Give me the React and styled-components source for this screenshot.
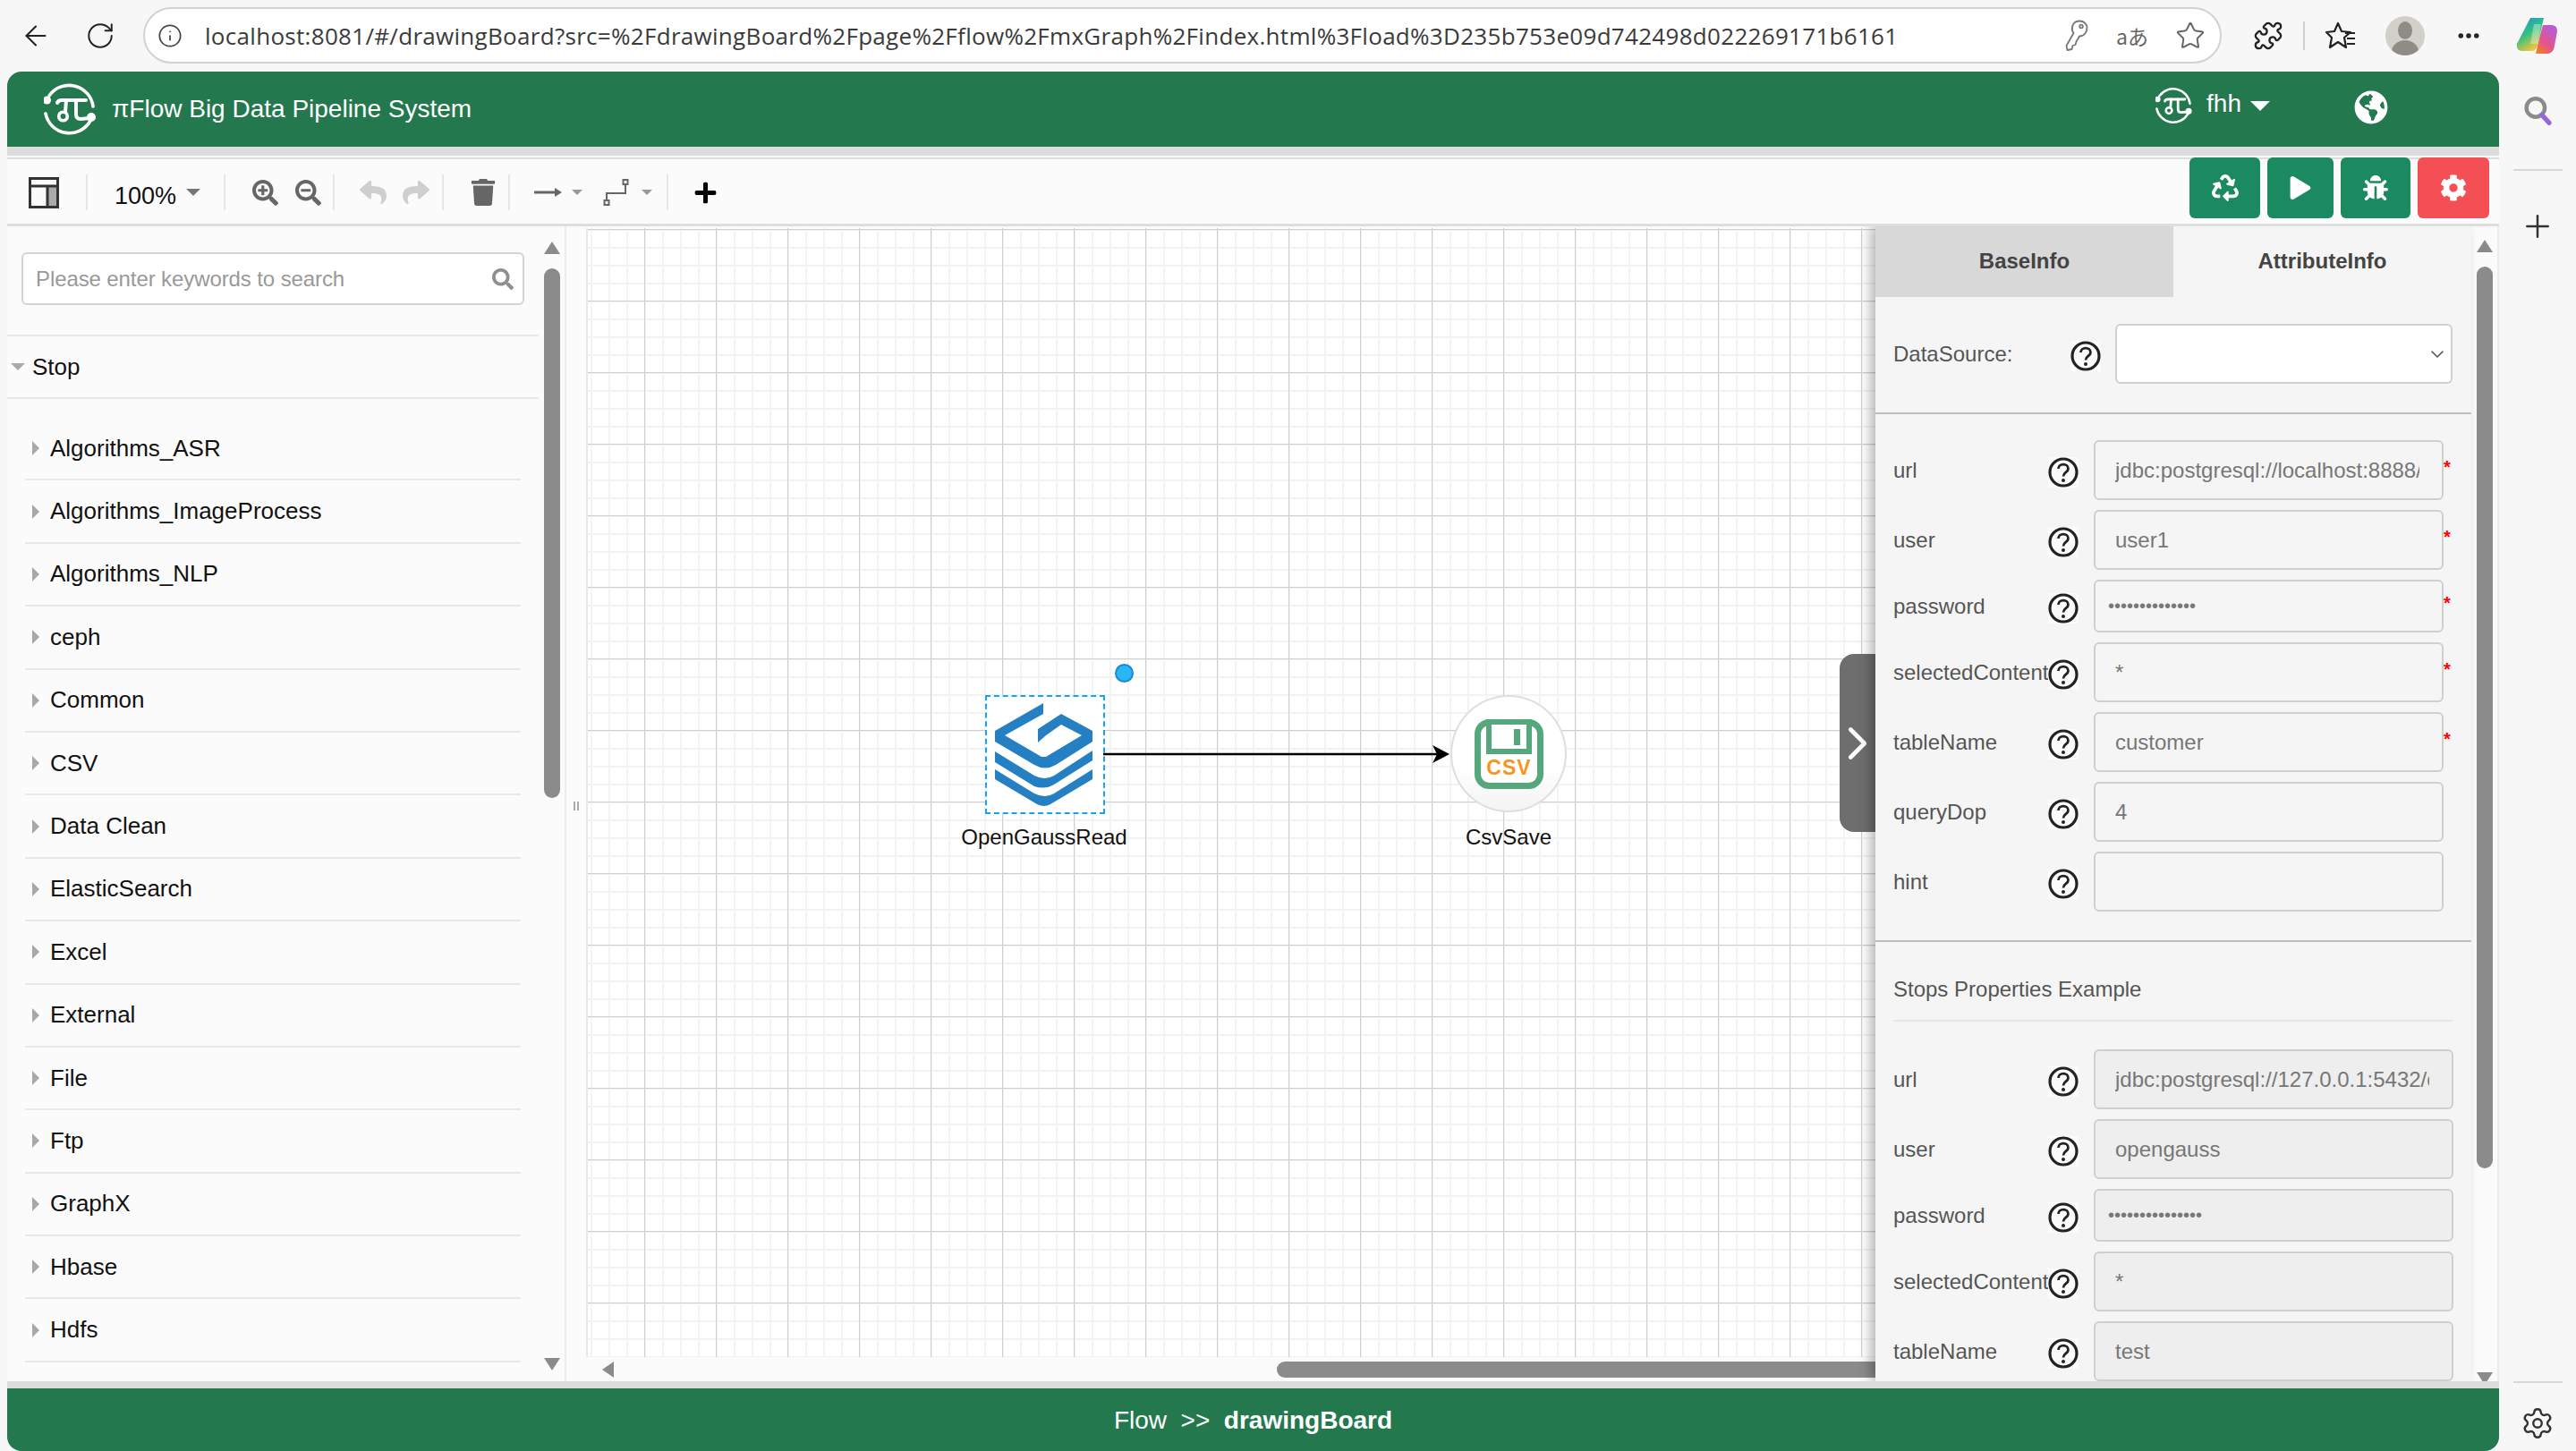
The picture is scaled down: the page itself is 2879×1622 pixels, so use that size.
import React from 'react'
import styled, { createGlobalStyle } from 'styled-components'
import { ArrowLeft, RotateCw, Info, Star, Puzzle, Ellipsis, Plus, Settings, ChevronRight, ChevronDown } from 'lucide-react'
import { FaRecycle, FaPlay, FaBug, FaCog, FaGlobeAmericas, FaTrash, FaSearchPlus, FaSearchMinus, FaReply, FaShare, FaSearch, FaPlus } from 'react-icons/fa'

const Global = createGlobalStyle`
html, body { margin: 0; padding: 0; background: #f7f7f7; }
* { box-sizing: border-box; }
body { font-family: "Liberation Sans", Arial, sans-serif; }
`

const Page = styled.div`
width: 2879px;
height: 1622px;
overflow: hidden;
display: flex;
flex-direction: column;
background: #f7f7f7;
`

/* browser chrome */
const ChromeBar = styled.div`
height: 80px;
flex: none;
display: flex;
align-items: flex-start;
padding: 8px 0 0 4px;
`
const Slot = styled.div`
width: ${p => p.$w || 72}px;
height: 63px;
flex: none;
margin-left: ${p => p.$ml || 0}px;
display: flex;
align-items: center;
justify-content: center;
color: #222;
`
const AddressBar = styled.div`
width: 2323px;
height: 63px;
flex: none;
margin-left: 12px;
background: #fff;
border: 2px solid #d2d2d2;
border-radius: 32px;
display: flex;
align-items: center;
padding: 0 16px 0 14px;
color: #444;
`
const Url = styled.span`
margin-left: 25px;
font-family: "Open Sans", sans-serif;
font-size: 26px;
letter-spacing: 0.3px;
color: #3a3a3a;
white-space: nowrap;
`
const AddressTools = styled.div`
margin-left: auto;
display: flex;
align-items: center;
gap: 30px;
color: #666;
`
const Translate = styled.span`
font-family: "Noto Sans CJK JP", sans-serif;
font-size: 23px;
color: #666;
width: 36px;
text-align: center;
`
const ChromeSep = styled.div`
width: 2px;
height: 32px;
margin: 16px 6px 0 3px;
background: #d0d0d0;
flex: none;
`
const Avatar = styled.div`
width: 44px;
height: 44px;
margin: 10px 0 0 16px;
flex: none;
border-radius: 50%;
background: #d1d0cb;
position: relative;
overflow: hidden;
&::before {
  content: "";
  position: absolute;
  left: 14px;
  top: 6px;
  width: 16px;
  height: 20px;
  border-radius: 50%;
  background: #8f8c85;
}
&::after {
  content: "";
  position: absolute;
  left: 7px;
  top: 27px;
  width: 30px;
  height: 26px;
  border-radius: 50%;
  background: #8f8c85;
}
`

const Body = styled.div`
flex: 1;
min-height: 0;
display: flex;
`
const Main = styled.div`
width: 2785px;
margin-left: 8px;
flex: none;
display: flex;
flex-direction: column;
`

/* right rail of the browser */
const Rail = styled.div`
flex: 1;
display: flex;
flex-direction: column;
align-items: center;
padding-top: 28px;
color: #333;
`
const RailLine = styled.div`
width: 55px;
height: 2px;
background: #d8d8d8;
margin-top: ${p => p.$mt || 0}px;
`
const RailPlus = styled.div`
margin-top: 42px;
height: 40px;
color: #333;
`
const RailBottom = styled.div`
margin-top: auto;
display: flex;
flex-direction: column;
align-items: center;
padding-bottom: 12px;
gap: 26px;
`

/* green header */
const Header = styled.div`
height: 84px;
flex: none;
background: #23784d;
border-radius: 16px 16px 0 0;
display: flex;
align-items: center;
color: #fff;
padding-left: 41px;
`
const Title = styled.div`
margin-left: 16px;
font-size: 28px;
white-space: nowrap;
`
const UserBox = styled.div`
margin-left: auto;
display: flex;
align-items: center;
margin-top: -8px;
margin-right: 124px;
`
const UserName = styled.span`
font-size: 28px;
margin-left: 15px;
margin-top: -4px;
`
const Caret = styled.span`
display: inline-block;
width: 0;
height: 0;
margin-left: ${p => p.$ml || 0}px;
border-left: ${p => p.$s}px solid transparent;
border-right: ${p => p.$s}px solid transparent;
border-top: ${p => p.$s}px solid ${p => p.$c};
`
const Globe = styled(FaGlobeAmericas)`
margin: 3px 0 0 94px;
`
const Strip = styled.div`
height: ${p => p.$h}px;
flex: none;
background: #dcdcdc;
`

/* toolbar */
const Toolbar = styled.div`
height: 77px;
flex: none;
margin-top: 2px;
padding-top: 2px;
background: #fbfbfb;
border-top: 2px solid #dedede;
border-bottom: 3px solid #dedede;
display: flex;
align-items: center;
`
const ToolGroup = styled.div`
width: ${p => p.$w}px;
height: 40px;
flex: none;
display: flex;
align-items: center;
gap: ${p => p.$gap || 0}px;
padding-left: ${p => p.$pl}px;
border-right: ${p => (p.$last ? 'none' : '2px solid #e6e6e6')};
color: ${p => p.$c || '#666'};
`
const ToolSpacer = styled.span`
width: ${p => p.$w}px;
`
const ZoomText = styled.span`
font-size: 27px;
color: #111;
margin-right: 11px;
margin-top: 8px;
`
const Actions = styled.div`
margin-left: auto;
margin-right: 11px;
align-self: flex-start;
margin-top: -4px;
display: flex;
gap: 8px;
`
const ActionButton = styled.div`
width: ${p => p.$w}px;
height: 68px;
border-radius: 6px;
background: ${p => (p.$danger ? '#f44f54' : '#1c8a60')};
color: #fff;
display: flex;
align-items: center;
justify-content: center;
`

/* workspace */
const Workspace = styled.div`
flex: 1;
min-height: 0;
display: flex;
overflow: hidden;
`
const Sidebar = styled.div`
width: 625px;
flex: none;
background: #fbfbfb;
border-right: 2px solid #ececec;
display: flex;
`
const SideList = styled.div`
width: 594px;
flex: none;
`
const SearchArea = styled.div`
height: 123px;
padding: 29px 16px 0;
border-bottom: 2px solid #e8e8e8;
`
const SearchBox = styled.div`
height: 59px;
background: #fff;
border: 2px solid #d4d4d4;
border-radius: 6px;
display: flex;
align-items: center;
justify-content: space-between;
padding: 0 10px 0 14px;
color: #999;
font-size: 24px;
letter-spacing: -0.1px;
`
const StopRow = styled.div`
height: 70px;
display: flex;
align-items: center;
padding-left: 4px;
border-bottom: 2px solid #e8e8e8;
font-size: 26px;
color: #111;
gap: 8px;
`
const StopRows = styled.div`
padding: 21px 20px 0 20px;
`
const StopItem = styled.div`
height: 70.4px;
display: flex;
align-items: center;
padding-left: 8px;
border-bottom: 2px solid #e8e8e8;
font-size: 26px;
color: #111;
`
const SideArrow = styled.span`
width: 0;
height: 0;
margin-right: 12px;
border-top: 8px solid transparent;
border-bottom: 8px solid transparent;
border-left: 8px solid #a8a8a8;
`
const ScrollCol = styled.div`
width: 18px;
flex: none;
margin-left: ${p => p.$ml || 0}px;
padding: ${p => p.$pt}px 0 ${p => p.$pb}px;
display: flex;
flex-direction: column;
height: 100%;
`
const ScrollUp = styled.div`
width: 0;
height: 0;
border-left: 9px solid transparent;
border-right: 9px solid transparent;
border-bottom: 14px solid #8b8b8b;
flex: none;
`
const ScrollDown = styled.div`
width: 0;
height: 0;
margin-top: auto;
margin-bottom: ${p => p.$mb || 0}px;
border-left: 9px solid transparent;
border-right: 9px solid transparent;
border-top: 14px solid #8b8b8b;
flex: none;
`
const ScrollThumb = styled.div`
width: 18px;
height: ${p => p.$h}px;
margin-top: 16px;
border-radius: 9px;
background: #8b8b8b;
flex: none;
`
const Splitter = styled.div`
width: 22px;
flex: none;
background: #fbfbfb;
display: flex;
align-items: center;
justify-content: center;
gap: 2px;
`
const Grip = styled.div`
width: 2px;
height: 10px;
margin-top: 4px;
background: #aaa;
`
const CanvasCol = styled.div`
width: 1441px;
flex: none;
display: flex;
flex-direction: column;
background: #fbfbfb;
position: relative;
`
const Grid = styled.div`
flex: 1;
position: relative;
margin-top: 2px;
border-left: 2px solid #e8e8e8;
background-color: #fff;
background-image:
  linear-gradient(#cfcfcf 1px, transparent 1px),
  linear-gradient(90deg, #cfcfcf 1px, transparent 1px),
  linear-gradient(#f3f3f3 2px, transparent 2px),
  linear-gradient(90deg, #f3f3f3 2px, transparent 2px);
background-size: 80px 80px, 80px 80px, 20px 20px, 20px 20px;
background-position: 0 1px, -17px 0, 0 1px, -17px 0;
`
const Node = styled.div`
position: absolute;
left: ${p => p.$x}px;
top: ${p => p.$y}px;
width: ${p => p.$w}px;
height: ${p => p.$h}px;
`
const Selected = styled(Node)`
background: #fff;
border: 2px dashed #12a5f4;
padding-right: 3px;
display: flex;
align-items: center;
justify-content: center;
`
const Handle = styled(Node)`
border-radius: 50%;
background: #29b6f6;
border: 2px solid #1a8ad0;
`
const RoundNode = styled(Node)`
border-radius: 50%;
border: 2px solid #dedede;
background: linear-gradient(#fff 60%, #f4f4f4);
display: flex;
align-items: center;
justify-content: center;
`
const NodeLabel = styled(Node)`
font-size: 24px;
line-height: 28px;
text-align: center;
color: #111;
white-space: nowrap;
`
const Edge = styled.svg`
position: absolute;
left: ${p => p.$x}px;
top: ${p => p.$y}px;
`
const HScroll = styled.div`
height: 27px;
flex: none;
padding-top: 1px;
display: flex;
align-items: center;
padding-left: 18px;
`
const ScrollLeft = styled.div`
width: 0;
height: 0;
border-top: 9px solid transparent;
border-bottom: 9px solid transparent;
border-right: 13px solid #8b8b8b;
`
const HThumb = styled.div`
height: 18px;
margin-left: 741px;
flex: 1;
border-radius: 9px 0 0 9px;
background: #8b8b8b;
`
const Toggle = styled.div`
position: absolute;
right: 0;
top: 478px;
width: 40px;
height: 199px;
background: #6e6e6e;
border-radius: 16px 0 0 16px;
display: flex;
align-items: center;
justify-content: center;
color: #fff;
`
const ToggleIcon = styled(ChevronRight)`
flex: none;
`

/* right panel */
const Panel = styled.div`
width: 666px;
flex: none;
background: #f5f5f5;
box-shadow: -6px 0 12px rgba(0, 0, 0, 0.28);
position: relative;
overflow: hidden;
`
const Tabs = styled.div`
height: 79px;
display: flex;
`
const Tab = styled.div`
flex: 1;
display: flex;
align-items: center;
justify-content: center;
padding-bottom: 2px;
font-size: 24px;
font-weight: 700;
color: #444;
background: ${p => (p.$off ? '#d8d8d8' : 'transparent')};
`
const SourceRow = styled.div`
display: flex;
align-items: center;
padding: 30px 21px 32px 20px;
border-bottom: 2px solid #bdbdbd;
`
const Label = styled.div`
width: ${p => p.$w}px;
flex: none;
font-size: 24px;
color: #555;
overflow: hidden;
white-space: nowrap;
`
const Select = styled.div`
width: 377px;
height: 67px;
margin-left: 16px;
background: #fff;
border: 2px solid #d0d0d0;
border-radius: 6px;
display: flex;
align-items: center;
justify-content: flex-end;
padding-right: 3px;
color: #555;
`
const Fields = styled.div`
display: flex;
flex-direction: column;
gap: 11px;
padding: ${p => p.$pt}px 0 ${p => p.$pb}px 20px;
border-bottom: ${p => (p.$line ? '2px solid #bdbdbd' : 'none')};
`
const Row = styled.div`
height: ${p => p.$h || 67}px;
flex: none;
display: flex;
align-items: center;
`
const Field = styled.input`
width: ${p => (p.$example ? 402 : 391)}px;
height: 100%;
margin-left: 17px;
flex: none;
padding: 0 25px 0 ${p => (p.type === 'password' ? 14 : 22)}px;
border: 2px solid #cfcfcf;
border-radius: 6px;
outline: none;
background: ${p => (p.$example ? '#eeeeee' : 'transparent')};
color: #777;
font-family: "Liberation Sans", Arial, sans-serif;
font-size: ${p => (p.type === 'password' ? 20 : 24)}px;
`
const Required = styled.span`
color: #f00;
font-size: 20px;
font-weight: 700;
transform: translateY(-3px);
`
const ExampleTitle = styled.div`
height: 89px;
margin: 0 21px 0 20px;
padding-top: 39px;
font-size: 24px;
line-height: 28px;
color: #555;
border-bottom: 2px solid #e6e6e6;
`
const PanelScroll = styled.div`
width: 31px;
flex: none;
background: #fbfbfb;
padding-left: 6px;
border-right: 2px solid #ececec;
`
const HelpSvg = styled.svg`
flex: none;
margin-top: 4px;
`

/* footer */
const Footer = styled.div`
height: 70px;
flex: none;
padding-top: 2px;
background: #23784d;
border-radius: 0 0 16px 16px;
color: #fff;
font-size: 28px;
display: flex;
align-items: center;
justify-content: center;
white-space: pre;
`
const Crumb = styled.b`
font-weight: 700;
`

const PiLogo = ({ size }) => (
  <svg width={size} height={size} viewBox="0 0 60 60" fill="none" stroke="#fff" strokeWidth="3.6" strokeLinecap="round">
    <path d="M6 15 A27 27 0 0 1 55 27" />
    <path d="M52 43 A27 27 0 0 1 2 35" />
    <circle cx="3.5" cy="20" r="4.5" fill="#fff" stroke="none" />
    <circle cx="53" cy="39" r="5" fill="#fff" stroke="none" />
    <path d="M15 23 C16 20 18 20 20 20 L47 20" strokeWidth="4" />
    <path d="M25 20 L24 33" strokeWidth="4" />
    <path d="M36 20 L36 36 Q36 41 41 41 L52 40" strokeWidth="4" />
    <circle cx="21.5" cy="38" r="4.8" strokeWidth="3.6" />
  </svg>
)

const HelpIcon = () => (
  <HelpSvg width="34" height="34" viewBox="0 0 34 34" fill="none">
    <rect width="34" height="34" fill="#fbfbfb" />
    <circle cx="17" cy="17" r="15" stroke="#222" strokeWidth="3.2" />
    <path d="M11.5 13 C11.5 6.5 22.5 6.5 22.5 13 C22.5 17 17 17 17 21.5" stroke="#222" strokeWidth="2.8" />
    <circle cx="17" cy="26" r="2" fill="#222" />
  </HelpSvg>
)

const GaussLogo = () => (
  <svg width="111" height="116" viewBox="0 0 111 116" fill="#2580c3">
    <path d="M55 0 L1 31 L1 43 L45 69 Q57 76 69 69 L110 43 L110 31 L75 12 L49 29 L49 44 L58 36 L75 24 L98 36 L58 60 L53 60 L12 36 L55 12 Z" />
    <path d="M1 54 L45 81 Q57 87 67 81 L110 53 L110 64 L67 91 Q57 97 45 93 L1 66 Z" />
    <path d="M1 74 L45 101 Q57 107 67 101 L110 74 L110 85 L63 113 Q56 117 48 113 L1 85 Z" />
  </svg>
)

const CsvIcon = () => (
  <svg width="77" height="78" viewBox="0 0 77 78">
    <rect x="3.5" y="3.5" width="70" height="71" rx="13" fill="#fff" stroke="#55a87b" strokeWidth="7" />
    <rect x="16" y="3" width="45" height="33" fill="#fff" stroke="#55a87b" strokeWidth="6" />
    <rect x="44" y="11" width="7" height="18" fill="#55a87b" />
    <text x="38.5" y="62" textAnchor="middle" fontFamily="Liberation Sans" fontWeight="700" fontSize="23" letterSpacing="1" fill="#f7941e">CSV</text>
  </svg>
)

const LayoutIcon = () => (
  <svg width="34" height="35" viewBox="0 0 34 35" fill="none">
    <rect x="21" y="10" width="11" height="23" fill="#aaa" />
    <rect x="1.5" y="1.5" width="31" height="32" stroke="#333" strokeWidth="3" />
    <path d="M1 10 H33 M21 10 V34" stroke="#333" strokeWidth="3" />
  </svg>
)

const ConnectArrow = () => (
  <svg width="31" height="14" viewBox="0 0 31 14">
    <path d="M0 7 H26" stroke="#666" strokeWidth="3" />
    <path d="M23 2 L31 7 L23 12 Z" fill="#666" />
  </svg>
)

const WaypointIcon = () => (
  <svg width="39" height="30" viewBox="0 0 39 30" fill="none" stroke="#666" strokeWidth="2">
    <path d="M4 24 V16 H25 V6" />
    <rect x="22.5" y="1" width="5" height="5" />
    <rect x="1.5" y="24" width="5" height="5" />
  </svg>
)

const KeyIcon = () => (
  <svg width="28" height="36" viewBox="0 0 26 36" fill="none" stroke="#777" strokeWidth="1.8" strokeLinejoin="round">
    <path d="M16 1.5 C10 1.5 7 6.5 8 12 L9.5 15 L1.5 29 L2.5 34 L7.5 33 L8.5 29 L11.5 28 L12.5 24.5 L16 18.5 C22 18.5 24.5 13 24.5 9 C24.5 5 21 1.5 16 1.5 Z" />
    <circle cx="18" cy="7.5" r="1.8" />
  </svg>
)

const FavoritesIcon = () => (
  <svg width="34" height="34" viewBox="0 0 34 34" fill="none" stroke="#222" strokeWidth="2.2" strokeLinejoin="round">
    <path d="M14 3 L18 12 L28 13 L21 19 L23 30 L14 24 L5 30 L7 19 L1 13 L10 12 Z" fill="none" />
    <path d="M22 14 H33 M24 20 H33 M24 26 H33" />
  </svg>
)

const CopilotIcon = () => (
  <svg width="46" height="42" viewBox="0 0 46 42">
    <defs>
      <linearGradient id="copA" x1="0" y1="0" x2="0.5" y2="1">
        <stop offset="0" stopColor="#1b8fe0" />
        <stop offset="0.55" stopColor="#35c27f" />
        <stop offset="1" stopColor="#f2c53c" />
      </linearGradient>
      <linearGradient id="copB" x1="0.8" y1="0" x2="0.2" y2="1">
        <stop offset="0" stopColor="#b15fe0" />
        <stop offset="0.6" stopColor="#e2548f" />
        <stop offset="1" stopColor="#f47a2c" />
      </linearGradient>
    </defs>
    <path d="M16 1 H31 L24 32 Q23 38 16 38 H6 Q0 37 1 30 Z" fill="url(#copA)" />
    <path d="M22 41 H36 Q42 40 43 32 L46 16 Q46 8 38 9 H30 L27 20 L22 41 Z" fill="url(#copB)" />
    <path d="M20 8 H28 L24 30 H16 Z" fill="#fff" opacity="0.35" />
  </svg>
)

const RailSearch = () => (
  <svg width="33" height="32" viewBox="0 0 36 36" fill="none">
    <circle cx="15" cy="14" r="11.5" stroke="#8a8a8a" strokeWidth="5" />
    <path d="M23 23 L32 33" stroke="#9468d8" strokeWidth="6" strokeLinecap="round" />
  </svg>
)

const stops = ['Algorithms_ASR', 'Algorithms_ImageProcess', 'Algorithms_NLP', 'ceph', 'Common', 'CSV', 'Data Clean', 'ElasticSearch', 'Excel', 'External', 'File', 'Ftp', 'GraphX', 'Hbase', 'Hdfs']

const fields = [
  { name: 'url', value: 'jdbc:postgresql://localhost:8888/postgres', req: true },
  { name: 'user', value: 'user1', req: true },
  { name: 'password', value: 'xxxxxxxxxxxxxx', pass: true, req: true },
  { name: 'selectedContent', value: '*', req: true },
  { name: 'tableName', value: 'customer', req: true },
  { name: 'queryDop', value: '4' },
  { name: 'hint', value: '' },
]

const examples = [
  { name: 'url', value: 'jdbc:postgresql://127.0.0.1:5432/opengauss' },
  { name: 'user', value: 'opengauss' },
  { name: 'password', value: 'xxxxxxxxxxxxxxx', pass: true },
  { name: 'selectedContent', value: '*' },
  { name: 'tableName', value: 'test' },
]

const FieldRow = ({ item, example }) => (
  <Row $h={item.pass ? 59 : 67}>
    <Label $w={173}>{item.name}</Label>
    <HelpIcon />
    <Field readOnly $example={example} type={item.pass ? 'password' : 'text'} value={item.value} />
    {item.req && <Required>*</Required>}
  </Row>
)

const App = () => {
  return (
    <Page>
      <Global />
      <ChromeBar>
        <Slot><ArrowLeft size={36} strokeWidth={1.4} /></Slot>
        <Slot><RotateCw size={34} strokeWidth={1.4} /></Slot>
        <AddressBar>
          <Info size={28} strokeWidth={1.5} />
          <Url>localhost:8081/#/drawingBoard?src=%2FdrawingBoard%2Fpage%2Fflow%2FmxGraph%2Findex.html%3Fload%3D235b753e09d742498d022269171b6161</Url>
          <AddressTools>
            <KeyIcon />
            <Translate>aあ</Translate>
            <Star size={34} strokeWidth={1.4} />
          </AddressTools>
        </AddressBar>
        <Slot $ml={16}><Puzzle size={34} strokeWidth={1.6} /></Slot>
        <ChromeSep />
        <Slot $w={68}><FavoritesIcon /></Slot>
        <Avatar />
        <Slot $ml={13}><Ellipsis size={30} strokeWidth={2.4} /></Slot>
        <Slot $w={46} $ml={17}><CopilotIcon /></Slot>
      </ChromeBar>
      <Body>
        <Main>
          <Header>
            <PiLogo size={60} />
            <Title>πFlow Big Data Pipeline System</Title>
            <UserBox>
              <PiLogo size={42} />
              <UserName>fhh</UserName>
              <Caret $s={11} $c="#fff" $ml={10} />
              <Globe size={38} />
            </UserBox>
          </Header>
          <Strip $h={10} />
          <Toolbar>
            <ToolGroup $w={90} $pl={24}><LayoutIcon /></ToolGroup>
            <ToolGroup $w={154} $pl={30}>
              <ZoomText>100%</ZoomText>
              <Caret $s={8} $c="#777" />
            </ToolGroup>
            <ToolGroup $w={122} $pl={30} $gap={19}>
              <FaSearchPlus size={29} />
              <FaSearchMinus size={29} />
            </ToolGroup>
            <ToolGroup $w={122} $pl={28} $gap={18} $c="#cfcfcf">
              <FaReply size={30} />
              <FaShare size={30} />
            </ToolGroup>
            <ToolGroup $w={74} $pl={29}><FaTrash size={30} /></ToolGroup>
            <ToolGroup $w={177} $pl={27}>
              <ConnectArrow />
              <Caret $s={6} $c="#999" $ml={11} />
              <ToolSpacer $w={23} />
              <WaypointIcon />
              <Caret $s={6} $c="#999" $ml={4} />
            </ToolGroup>
            <ToolGroup $w={60} $pl={28} $last $c="#000"><FaPlus size={27} /></ToolGroup>
            <Actions>
              <ActionButton $w={79}><FaRecycle size={30} /></ActionButton>
              <ActionButton $w={74}><FaPlay size={26} /></ActionButton>
              <ActionButton $w={78}><FaBug size={28} /></ActionButton>
              <ActionButton $w={80} $danger><FaCog size={30} /></ActionButton>
            </Actions>
          </Toolbar>
          <Workspace>
            <Sidebar>
              <SideList>
                <SearchArea>
                  <SearchBox>
                    Please enter keywords to search
                    <FaSearch size={24} color="#8f8f8f" />
                  </SearchBox>
                </SearchArea>
                <StopRow>
                  <Caret $s={8} $c="#aaa" />
                  Stop
                </StopRow>
                <StopRows>
                  {stops.map(s => (
                    <StopItem key={s}><SideArrow />{s}</StopItem>
                  ))}
                </StopRows>
              </SideList>
              <ScrollCol $ml={6} $pt={17} $pb={12}>
                <ScrollUp />
                <ScrollThumb $h={592} />
                <ScrollDown />
              </ScrollCol>
            </Sidebar>
            <Splitter><Grip /><Grip /></Splitter>
            <CanvasCol>
              <Grid>
                <Selected $x={444} $y={522} $w={134} $h={133}><GaussLogo /></Selected>
                <Handle $x={589} $y={487} $w={21} $h={21} />
                <Edge $x={576} $y={575} width="392" height="30" viewBox="0 0 392 30">
                  <path d="M0 13 H375" stroke="#000" strokeWidth="2.6" />
                  <path d="M368 3 L387 13 L368 23 L373 13 Z" fill="#000" />
                </Edge>
                <RoundNode $x={964} $y={522} $w={130} $h={131}><CsvIcon /></RoundNode>
                <NodeLabel $x={410} $y={667} $w={200} $h={28}>OpenGaussRead</NodeLabel>
                <NodeLabel $x={929} $y={667} $w={200} $h={28}>CsvSave</NodeLabel>
              </Grid>
              <HScroll>
                <ScrollLeft />
                <HThumb />
              </HScroll>
              <Toggle><ToggleIcon size={62} strokeWidth={1.8} /></Toggle>
            </CanvasCol>
            <Panel>
              <Tabs>
                <Tab $off>BaseInfo</Tab>
                <Tab>AttributeInfo</Tab>
              </Tabs>
              <SourceRow>
                <Label $w={198}>DataSource:</Label>
                <HelpIcon />
                <Select><ChevronDown size={24} strokeWidth={1.6} /></Select>
              </SourceRow>
              <Fields $pt={29} $pb={32} $line>
                {fields.map(f => <FieldRow key={f.name} item={f} />)}
              </Fields>
              <ExampleTitle>Stops Properties Example</ExampleTitle>
              <Fields $pt={31} $pb={0}>
                {examples.map(f => <FieldRow key={f.name} item={f} example />)}
              </Fields>
            </Panel>
            <PanelScroll>
              <ScrollCol $pt={15} $pb={0}>
                <ScrollUp />
                <ScrollThumb $h={1008} />
                <ScrollDown $mb={-4} />
              </ScrollCol>
            </PanelScroll>
          </Workspace>
          <Strip $h={8} />
          <Footer>Flow  {'>>'}  <Crumb>drawingBoard</Crumb></Footer>
        </Main>
        <Rail>
          <RailSearch />
          <RailLine $mt={49} />
          <RailPlus><Plus size={40} strokeWidth={1.5} /></RailPlus>
          <RailBottom>
            <RailLine />
            <Settings size={38} strokeWidth={1.5} />
          </RailBottom>
        </Rail>
      </Body>
    </Page>
  )
}

export default App
